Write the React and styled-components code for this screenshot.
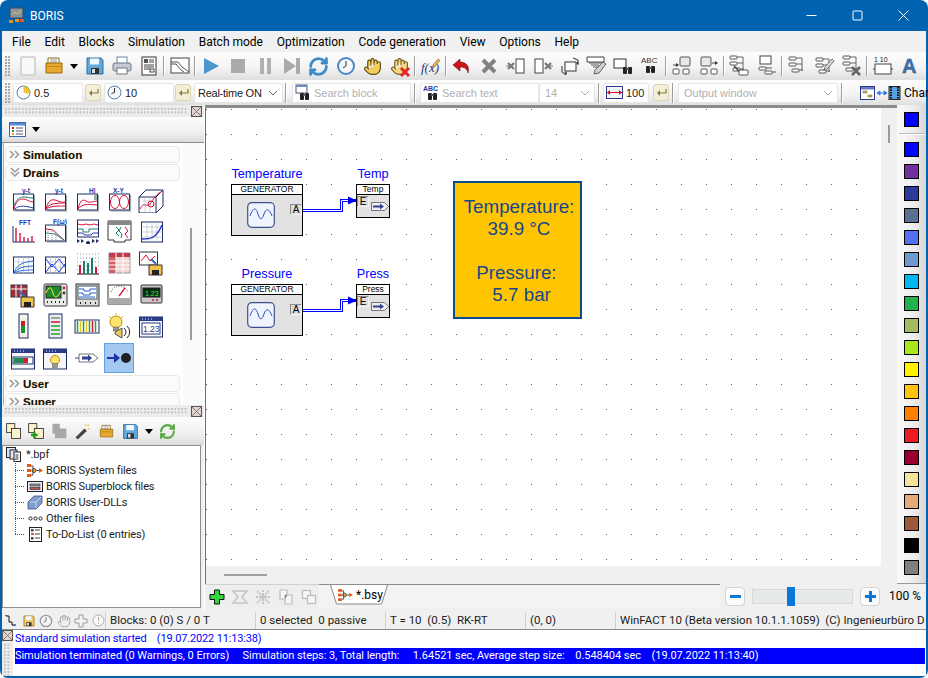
import React from 'react';
import styled, { createGlobalStyle } from 'styled-components';
import { RefreshCw, Hand } from 'lucide-react';

const UI = `Roboto, "Liberation Sans", sans-serif`;
const ARIAL = `"Liberation Sans", Arial, sans-serif`;

const Global = createGlobalStyle`
  html, body { margin: 0; padding: 0; background: #fff; overflow: hidden; }
  #root { width: 928px; height: 678px; }
`;

const Win = styled.div`
  box-sizing: border-box; width: 928px; height: 678px; padding: 0 2px 2px;
  background: #0063b1; border-radius: 8px 8px 8px 8px; overflow: hidden;
  display: flex; flex-direction: column; font: 12px ${UI}; color: #000;
`;
const TitleBar = styled.div`
  height: 31px; flex: none; display: flex; align-items: center; color: #fff; padding-left: 7px; font-size: 12px;
`;
const TitleText = styled.span` margin-left: 6px; flex: 1; `;
const WinBtn = styled.span`
  width: 46px; height: 31px; display: flex; align-items: center; justify-content: center;
`;
const MenuBar = styled.div`
  height: 21px; flex: none; background: #f0f0f0; display: flex; align-items: center; gap: 13.7px; padding-left: 10px;
`;
const Toolbar = styled.div`
  flex: none; height: ${p => p.$h}px; display: flex; align-items: center; padding-left: 3px;
  background: linear-gradient(#fdfdfd, #f4f4f4 55%, #dfdfdf);
`;
const Grip = styled.span`
  flex: none; width: 6px; height: 20px; margin-right: 2px;
  background-image: radial-gradient(circle at 1px 1px, #a9a9a9 .9px, transparent 1px);
  background-size: 3px 3px;
`;
const ToolCell = styled.span`
  flex: none; width: ${p => p.$w || 27}px; height: 26px; display: flex; align-items: center; justify-content: center;
`;
const Sep = styled.span`
  flex: none; width: 1px; height: 20px; background: #9e9e9e; margin: 0 ${p => p.$r ?? 2}px 0 ${p => p.$l ?? 1}px; box-shadow: 1px 0 0 #fff;
`;
const Field = styled.span`
  flex: none; box-sizing: border-box; width: ${p => p.$w}px; height: 20px; margin-left: ${p => p.$ml || 0}px;
  background: #fff; border: 1px solid #e6e6e6; border-radius: 2px; display: flex; align-items: center; padding-left: 2px;
  font: 11px ${ARIAL}; color: ${p => p.$dim ? '#b0b0b0' : '#222'}; white-space: nowrap; overflow: hidden; position: relative;
`;
const FieldText = styled.span` margin-left: ${p => p.$ml ?? 3}px; flex: 1; letter-spacing: ${p => p.$ls || 0}px; `;
const EnterBtn = styled.span`
  flex: none; box-sizing: border-box; width: 16px; height: 17px; margin-left: ${p => p.$ml || 2}px; border: 1px solid #d9d4b4; border-radius: 3px;
  background: #f2eed8; display: flex; align-items: center; justify-content: center;
`;
const CharLabel = styled.span` font: 12px ${UI}; margin-left: 1px; white-space: nowrap; `;
const Main = styled.div` flex: none; height: 507px; display: flex; background: #f0f0f0; `;
const Left = styled.div` flex: none; width: 202px; display: flex; flex-direction: column; background: #f0f0f0; `;
const PanelGrip = styled.div`
  flex: none; height: 12px; display: flex; align-items: center; padding: 0 2px 0 3px; gap: 3px;
  background: #ececec;
`;
const GripDots = styled.span`
  flex: 1; height: 7px;
  background-image: radial-gradient(circle at 1px 1px, #bdbdbd .9px, transparent 1px);
  background-size: 3.4px 3.5px;
`;
const PanelBar = styled.div`
  flex: none; box-sizing: border-box; height: ${p => p.$h}px; display: flex; align-items: center; padding-left: ${p => p.$pl}px;
  background: linear-gradient(#fdfdfd, #ededed 70%, #dadada); border-bottom: ${p => p.$line ? '1px solid #8d8d8d' : 'none'};
`;
const BlockScroll = styled.div`
  flex: none; height: 262px; background: #fff; overflow: hidden; display: flex; border-left: 1px solid #aaa; margin-left: 1px; box-sizing: border-box;
`;
const BlockInner = styled.div` flex: none; width: 178px; padding: 3px 0 0 1px; `;
const Group = styled.div`
  box-sizing: border-box; width: 175px; height: 17px; margin-bottom: 1px; border: 1px solid #e8e8e8; border-radius: 4px; background: #fbfbfb;
  display: flex; align-items: center; gap: 1px; padding-left: 3px;
  font: bold 11.6px ${ARIAL}; color: #111; text-shadow: 0 0 1px #f3c66f;
`;
const IconGrid = styled.div`
  display: grid; grid-template-columns: repeat(5, 32px); grid-auto-rows: 31.6px; padding: 2px 0 1px 2px;
`;
const IconCell = styled.span`
  display: flex; align-items: center; justify-content: center; box-sizing: border-box;
  ${p => p.$on ? 'background:#a3c9f1; border:1px solid #5ea2e6; margin:1px;' : ''}
`;
const ScrollTrack = styled.div` flex: none; width: 20px; padding: 85px 0 0 7px; box-sizing: border-box; background: #fafafa; `;
const ScrollThumbV = styled.div` width: 2px; height: ${p => p.$h}px; background: #9b9b9b; `;
const Tree = styled.div`
  flex: 1; margin: 0 3px 4px 0; background: #fff; border: 1px solid #8f8f8f; font-size: 11px; color: #1c1c1c; letter-spacing: -.15px;
`;
const TreeRoot = styled.div` height: 16px; display: flex; align-items: center; padding-left: 3px; gap: 5px; `;
const TreeKids = styled.div`
  position: relative; margin-left: 12px;
  &::before { content: ''; position: absolute; left: 0; top: -3px; bottom: 8px; border-left: 1px dotted #555; }
`;
const TreeRow = styled.div`
  height: 16px; display: flex; align-items: center; gap: 3px;
  &::before { content: ''; width: 9px; flex: none; border-top: 1px dotted #555; }
`;
const TreeGlyph = styled.span` flex: none; width: 16px; display: flex; justify-content: center; `;
const Right = styled.div` flex: 1; display: flex; flex-direction: column; min-width: 0; border-left: 1px solid #fff; `;
const Upper = styled.div` height: 479px; flex: none; display: flex; `;
const CanvasWrap = styled.div`
  width: 692px; flex: none; display: grid; grid-template-columns: 676px 16px; grid-template-rows: 458px 18px;
  border-top: 3px solid #8c8c8c; background: #f0f0f0;
`;
const Canvas = styled.div`
  position: relative; background-color: #fff; border-left: 1px solid #6e6e6e; overflow: hidden;
  background-image: radial-gradient(circle at .5px .5px, #666 .6px, transparent .9px);
  background-size: 25px 25px; background-position: 0 1px;
`;
const VStrip = styled.div` background: #f0f0f0; padding: 17px 0 0 7px; `;
const HStrip = styled.div` background: #f0f0f0; padding: 8px 0 0 18px; border-left: 1px solid #6e6e6e; `;
const ThumbH = styled.div` width: 43px; height: 2px; background: #a0a0a0; `;
const Corner = styled.div` background: #f0f0f0; `;
const Palette = styled.div`
  flex: 1; display: flex; flex-direction: column; align-items: center; padding-top: 7px; gap: 7px; box-sizing: border-box;
  background: linear-gradient(90deg, #fafafa, #ececec 60%, #d6d6d6); border-bottom: 1px solid #9a9a9a;
`;
const Swatch = styled.span`
  flex: none; box-sizing: border-box; width: 15px; height: 15px; border: 1.4px solid #000; background: ${p => p.$c};
`;
const PaletteSep = styled.span` flex: none; width: 26px; height: 1px; background: #bdbdbd; box-shadow: 0 1px 0 #fff; margin: -1px 0 1px; `;
const TabBar = styled.div` flex: none; height: 28px; display: flex; background: #f0f0f0; `;
const TabTools = styled.div` width: 114px; height: 23px; display: flex; align-items: center; padding-left: 0; background: #eee; border-top: 1px solid #d0d0d0; `;
const TabIcon = styled.span` flex: none; width: 23px; display: flex; justify-content: center; `;
const Hatch = styled.div`
  flex: 1; height: 23px; border-top: 1px solid #8d8d8d; display: flex; padding-left: 11px;
  background: repeating-conic-gradient(#ececec 0 25%, #fafafa 0 50%) 0 0 / 2px 2px;
`;
const Tab = styled.div`
  position: relative; width: 58px; height: 19px; display: flex; align-items: center; gap: 3px; padding-left: 5px; box-sizing: border-box; font-size: 12px;
  & > svg.shape { position: absolute; left: 0; top: 0; z-index: 0; }
  & > * { position: relative; z-index: 1; }
`;
const ZoomZone = styled.div` width: 206px; flex: none; height: 24px; display: flex; align-items: center; padding-left: 5px; box-sizing: border-box; `;
const ZoomBtn = styled.span`
  flex: none; width: 20px; height: 19px; box-sizing: border-box; background: #fbfbfb; border: 1px solid #d4d4d4; border-radius: 4px;
  display: flex; align-items: center; justify-content: center;
`;
const ZoomTrack = styled.div`
  flex: none; width: 101px; height: 15px; margin: 0 7px; box-sizing: border-box; background: #e6e9e9; border: 1px solid #d8d8d8; padding-left: 34px; display: flex; align-items: center;
`;
const ZoomThumb = styled.span` width: 8px; height: 19px; background: #0a78d7; flex: none; `;
const ZoomText = styled.span` margin-left: 9px; font-size: 12px; white-space: nowrap; `;
const Status = styled.div` flex: none; height: 18px; background: #f0f0f0; display: flex; align-items: center; overflow: hidden; border-bottom: 1px solid #8d8d8d; box-sizing: border-box; font-size: 11.5px; `;
const StatusIcons = styled.div` flex: none; width: 103px; display: flex; align-items: center; padding-left: 1px; box-sizing: border-box; `;
const StatusIcon = styled.span` flex: none; width: 17.4px; display: flex; justify-content: center; `;
const StatusCell = styled.div`
  flex: none; box-sizing: border-box; width: ${p => p.$w}px; border-left: 1px solid #cfcfcf; padding-left: 4px; white-space: pre; height: 17px; line-height: 17px; color: #1c1c1c;
`;
const Log = styled.div` flex: none; height: 46px; background: #fff; display: flex; font-size: 11px; `;
const LogGrip = styled.div` flex: none; width: 11px; margin-right: 2px; background: #ececec; display: flex; flex-direction: column; align-items: center; gap: 3px; `;
const LogDots = styled.span`
  flex: 1; width: 7px;
  background-image: radial-gradient(circle at 1px 1px, #bdbdbd .9px, transparent 1px);
  background-size: 3.5px 3.4px;
`;
const LogBody = styled.div` flex: 1; min-width: 0; padding-top: 1px; `;
const LogLine = styled.div`
  height: 16px; line-height: 16px; white-space: pre; margin: ${p => p.$sel ? '1px 1px 0 0' : 0};
  letter-spacing: ${p => p.$sel ? '-.05px' : '-.16px'};
  color: ${p => p.$sel ? '#fff' : '#0000ff'}; background: ${p => p.$sel ? '#0000ff' : 'transparent'};
`;

/* free canvas items */
const NodeLabel = styled.div`
  position: absolute; left: ${p => p.$x}px; top: ${p => p.$y}px; width: ${p => p.$w}px; text-align: center; font: 12.7px/14px ${ARIAL}; color: #0000ff; white-space: nowrap;
`;
const BlockNode = styled.div`
  position: absolute; left: ${p => p.$x}px; top: ${p => p.$y}px; width: ${p => p.$w}px; height: ${p => p.$h}px; box-sizing: border-box;
  border: 1.4px solid #000; background: #e2e2e2; font: 8.5px ${ARIAL}; color: #000;
`;
const BlockHead = styled.div`
  height: 9px; line-height: 9px; background: #fff; border-bottom: 1.2px solid #000; text-align: center; overflow: hidden;
`;
const Port = styled.span`
  position: absolute; left: ${p => p.$x}px; top: ${p => p.$y}px; box-sizing: border-box; width: 12px; height: 11px; line-height: 9px; text-align: center; font-size: 10px;
  background: #dcdcdc; border: 1px solid; border-color: #8a8a8a #f6f6f6 #f6f6f6 #8a8a8a;
`;
const NodeGlyph = styled.span` position: absolute; left: ${p => p.$x}px; top: ${p => p.$y}px; display: flex; `;
const Wires = styled.svg` position: absolute; left: 0; top: 0; `;
const Display = styled.div`
  position: absolute; left: 247px; top: 73px; width: 129px; height: 138px; box-sizing: border-box; border: 2px solid #0b4a8f; background: #ffc600;
  color: #17478f; font: 18.8px/22px ${ARIAL}; text-align: center; padding: 13px 0 0 3px; white-space: pre;
`;

const Ico = ({ s = 22, vb = 22, children }) => <svg width={s} height={s} viewBox={`0 0 ${vb} ${vb}`} style={{ display: 'block' }}>{children}</svg>;

const Bk = ({ x, y, w = 7, h = 3, f = '#fff', c = '#444' }) => <rect x={x} y={y} width={w} height={h} rx=".8" fill={f} stroke={c} strokeWidth=".9" />;
const GX = ({ x, y, s = 4, c = '#777', w = 2.2 }) => <path d={`M${x - s} ${y - s}L${x + s} ${y + s}M${x + s} ${y - s}L${x - s} ${y + s}`} stroke={c} strokeWidth={w} />;
const Bino = ({ x, y }) => <g><rect x={x} y={y} width="4" height="7" rx="1" fill="#222" /><rect x={x + 5} y={y} width="4" height="7" rx="1" fill="#222" /><rect x={x + 3} y={y + 1} width="3" height="2" fill="#555" /></g>;
const Links = ({ x = 2, y = 3 }) => <g><Bk x={x} y={y} /><Bk x={x} y={y + 6} /><Bk x={x + 3} y={y + 12} /><path d={`M${x + 7} ${y + 1}h6M${x + 7} ${y + 7}h6M${x + 10} ${y + 13}h4M${x + 13} ${y + 1}v13`} stroke="#555" fill="none" strokeWidth=".9" /></g>;
const Folder = () => <><path d="M5 3h11v6H5z" fill="#fff" stroke="#8a6a20" /><path d="M7 5h7M7 7h7" stroke="#999" /><path d="M3 8h16v10H3z" fill="#e7aa2f" stroke="#97690f" /><path d="M3.500 11.500h15" stroke="#c1861a" /></>;
const Floppy = ({ f = '#62a8dc', c = '#2f6c9e' }) => <><path d="M3 3h14l2 2v14H3z" fill={f} stroke={c} /><rect x="6" y="3.500" width="9" height="6" fill="#f2f7fb" /><rect x="7" y="13" width="8" height="6" fill="#333" /><rect x="8" y="14" width="3" height="4" fill="#ddd" /></>;
const ClockFace = ({ c = '#4a86c8', w = 2 }) => <><circle cx="11" cy="11" r="8" fill="#f4f8fc" stroke={c} strokeWidth={w} /><path d="M11 6v5l-3 2" stroke="#333" fill="none" strokeWidth="1" /></>;

const T = {
  new: <rect x="5" y="2" width="14" height="18" rx="1" fill="#f8f8f8" stroke="#cacaca" strokeWidth="1.5" />,
  open: <Folder />,
  save: <Floppy />,
  print: <><rect x="6" y="2" width="10" height="7" fill="#fff" stroke="#6f87a3" /><rect x="2" y="8" width="18" height="8" rx="2" fill="#c3cad3" stroke="#6d7580" /><rect x="6" y="13" width="10" height="6" fill="#fff" stroke="#6f7780" /></>,
  doc: <><rect x="4" y="2" width="14" height="18" fill="#fff" stroke="#333" /><rect x="6" y="4" width="4" height="4" fill="#555" /><path d="M11 5h5M11 7h5M6 10h10M6 12h10M6 14h6" stroke="#444" /><rect x="12" y="14" width="4" height="3" fill="#fff" stroke="#444" /></>,
  chart: <><rect x="2" y="3" width="18" height="15" fill="#fff" stroke="#444" /><path d="M2 7h7l4 5 3 2 4 3M2 9h5l5 6 3 2" stroke="#444" fill="none" strokeWidth=".9" /></>,
  play: <path d="M4 3l15 8-15 8z" fill="#4b95cf" />,
  stop: <rect x="4" y="4" width="14" height="14" fill="#aaa" />,
  pause: <path d="M6 3h4v16H6zM13 3h4v16h-4z" fill="#b0b0b0" />,
  step: <path d="M3 3l12 8-12 8zM15 3h4v16h-4z" fill="#aaa" />,
  clock: <ClockFace />,
  fx: <><text x="1" y="17" fontFamily="Liberation Serif" fontStyle="italic" fontSize="13" fill="#2a3a7c">f(x)</text><path d="M13 10l5-6 2 1.500-5 6-3 1z" fill="#e8b25a" stroke="#8a5a20" strokeWidth=".6" /></>,
  undo: <path d="M9 4L2 10l7 6v-4c4 0 7 1 8 6 2-7-2-11-8-11z" fill="#c9141c" stroke="#7b0c10" strokeWidth=".6" />,
  x: <GX x={11} y={11} s={6} c="#828282" w={4} />,
  delL: <><GX x={6} y={11} s={3} /><path d="M1 11h4" stroke="#777" /><rect x="11" y="4" width="8" height="14" fill="#fff" stroke="#444" /></>,
  delR: <><rect x="3" y="4" width="8" height="14" fill="#fff" stroke="#444" /><GX x={16} y={11} s={3} /><path d="M17 11h4" stroke="#777" /></>,
  rot: <><rect x="6" y="7" width="11" height="9" fill="#fff" stroke="#333" /><path d="M3 11v6l4 3M14 3l5 2v5" fill="none" stroke="#333" /><path d="M5 18l3 1.500-.5-3zM17 9l3-.5-1.500-2z" fill="#333" /></>,
  edit: <><path d="M1 2h17v5H1z" fill="#fff" stroke="#444" /><path d="M3 8h12M5 10h8M7 12h6" stroke="#555" /><path d="M9 15l8-8 3 2-7 9-5 1z" fill="#d0d0d0" stroke="#444" strokeWidth=".8" /></>,
  find: <><rect x="1" y="4" width="12" height="9" fill="#fff" stroke="#333" /><Bino x={10} y={12} /></>,
  abc: <><text x="1" y="8" fontSize="8" fontFamily={ARIAL} fill="#333">ABC</text><Bino x={6} y={11} /></>,
  clipL: <><rect x="9" y="2" width="10" height="9" rx="1" fill="#e8e8e8" stroke="#555" /><Bk x={2} y={14} w={6} h={5} /><Bk x={12} y={14} w={6} h={5} /><path d="M2 10h4" stroke="#444" /><path d="M8 10l-3-2v4z" fill="#333" /></>,
  clipR: <><rect x="3" y="2" width="10" height="9" rx="1" fill="#e8e8e8" stroke="#555" /><Bk x={3} y={14} w={6} h={5} /><Bk x={13} y={14} w={6} h={5} /><path d="M14 8h4" stroke="#444" /><path d="M20 8l-3-2v4z" fill="#333" /></>,
  links: <><Links x={1} y={1} /><Bk x={10} y={15} w={9} h={5} /><path d="M5 11l5 5" stroke="#333" strokeWidth="1.200" /></>,
  monitor: <><rect x="4" y="1" width="11" height="8" fill="#fff" stroke="#444" /><Bk x={3} y={12} /><Bk x={9} y={16} /><path d="M10 13h6M16 17h4" stroke="#555" /></>,
  net: <Links x={2} y={2} />,
  netEdit: <><Links x={2} y={3} /><path d="M11 12l7-8 2 2-7 8-3 1z" fill="#ddd" stroke="#444" strokeWidth=".7" /></>,
  netDel: <><Links x={2} y={1} /><GX x={15} y={16} s={4} c="#666" w={2.600} /></>,
  seq: <><text x="2" y="7" fontSize="7" fontFamily={ARIAL} fill="#222">1 10</text><rect x="3" y="9" width="16" height="10" fill="#fff" stroke="#444" /><path d="M1 14h2M19 14h2" stroke="#444" /></>,
  font: <text x="3" y="18" fontFamily={ARIAL} fontWeight="bold" fontSize="20" fill="#4172ae" stroke="#24507f" strokeWidth=".4">A</text>,
};
const Lucide = {
  refresh: <RefreshCw size={21} color="#3a8ccb" strokeWidth={3.2} />,
  hand: <Hand size={19} color="#5a4a10" fill="#f3cc60" strokeWidth={1.4} />,
  handx: <span style={{ position: 'relative', display: 'flex' }}><Hand size={19} color="#7a5a20" fill="#f6d67e" strokeWidth={1.4} /><svg width="12" height="12" viewBox="0 0 12 12" style={{ position: 'absolute', right: -2, bottom: -2 }}><GX x={6} y={6} s={4} c="#e0252b" w={3} /></svg></span>,
};
const Drop = () => <svg width="8" height="5" viewBox="0 0 8 5" style={{ display: 'block' }}><path d="M0 0h8L4 5z" fill="#000" /></svg>;

const bar1 = ['new', 'open', 'drop', 'save', 'print', 'doc', '|', 'chart', '|', 'play', 'stop', 'pause', 'step', 'refresh', 'clock', 'hand', 'handx', '|', 'fx', '|', 'undo', 'x', 'delL', 'delR', 'rot', 'edit', 'find', 'abc', '|', 'clipL', 'clipR', '|', 'links', 'monitor', '|', 'net', 'netEdit', 'netDel', '|', 'seq', 'font'];

const Cross = () => <svg width="11" height="11" viewBox="0 0 11 11"><rect x=".5" y=".5" width="10" height="10" fill="#d8d8d8" stroke="#555" /><path d="M1 1l9 9M10 1l-9 9" stroke="#a86a5a" strokeWidth="1" /></svg>;
const Chev = ({ c = '#666', x }) => <svg width="10" height="6" viewBox="0 0 10 6" style={{ position: x ? 'absolute' : 'static', right: x }}><path d="M1 1l4 4 4-4" fill="none" stroke={c} /></svg>;
const EnterArrow = ({ c = '#8a7a35' }) => <svg width="11" height="9" viewBox="0 0 11 9"><path d="M10 1v4H2" fill="none" stroke={c} strokeWidth="1.200" /><path d="M4 2L1 5l3 3z" fill={c} /></svg>;
const Binoc = ({ abc }) => <svg width="18" height="18" viewBox="0 0 18 18" style={{ flex: 'none' }}>
  {abc ? <text x="0" y="7" fontSize="7" fontWeight="bold" fontFamily={ARIAL} fill="#2040a0">ABC</text> : <><rect x="1" y="1" width="11" height="8" fill="#fff" stroke="#557" /><rect x="1" y="1" width="11" height="2" fill="#6a8fc0" /></>}
  <Bino x={5} y={9} />
</svg>;

const Fr = ({ children, sh = true }) => <>{sh && <path d="M5 23.800h19.500V8" fill="none" stroke="#9aa" strokeWidth="1.200" />}<rect x="3.500" y="7" width="20" height="16" fill="#fff" stroke="#1d2b66" />{children}</>;
const R = '#d6123c', G = '#1a7f6e', N = '#2436a8';
const Grid = () => <path d="M3.500 12h20M3.500 17h20M8.500 7v16M13.500 7v16M18.500 7v16" stroke="#b8c0c8" strokeWidth=".7" />;
const TT = ({ x, y, t, f = N, s = 6.500 }) => <text x={x} y={y} fontSize={s} fontFamily={ARIAL} fontWeight="bold" fill={f}>{t}</text>;
const Lamp = ({ cx = 11, cy = 11, r = 6 }) => <><circle cx={cx} cy={cy} r={r} fill="#ffe36a" stroke="#b98a10" /><rect x={cx - 2.500} y={cy + r - 1} width="5" height="4" fill="#999" stroke="#555" strokeWidth=".5" /></>;
const WinFrame = ({ y = 7, h = 16, children }) => <><rect x="1.500" y={y} width="23" height={h} fill="#f4f6fa" stroke="#1d2b66" /><rect x="1.500" y={y} width="23" height="4" fill="#2a3a86" /><path d={`M4 ${y + 2}h1M7 ${y + 2}h1M10 ${y + 2}h1M13 ${y + 2}h1`} stroke="#fff" />{children}</>;

const B = [
  <Fr><TT x={12} y={6} t="y-t" /><path d="M4 22c2-8 5-10 9-10s6 3 10 3" fill="none" stroke={R} /><path d="M4 18c4-8 7-8 10-8s5 1 9 1" fill="none" stroke={G} /><path d="M5 22c3-3 8-4 18-1" fill="none" stroke={N} /></Fr>,
  <Fr><TT x={13} y={6} t="y-t" /><path d="M4 22c2-8 5-10 9-9s6 3 10 2" fill="none" stroke={R} /><path d="M4 22c3-5 8-6 19-6M4 22c5-3 10-3 19-3" fill="none" stroke={R} /></Fr>,
  <Fr><TT x={15} y={6} t="H|" /><rect x="20" y="7" width="3" height="6" fill="#9aa" /><path d="M4 22c2-9 5-10 8-8 3 2 4 1 11 0M4 22c4-5 9-5 19-4" fill="none" stroke={R} /></Fr>,
  <Fr><TT x={7} y={6} t="X-Y" /><ellipse cx="9" cy="15" rx="4.500" ry="6.500" fill="none" stroke={R} /><ellipse cx="18" cy="15" rx="4.500" ry="6.500" fill="none" stroke={R} /></Fr>,
  <><path d="M1 10l7-7h17v16l-7 7H1zM1 10h17v16M18 10l7-7" fill="#fff" stroke="#1d2b66" /><path d="M2 22c4-8 6-2 9-4s5-10 12-13" fill="none" stroke={R} /><path d="M4 14h13M4 18h13M7 10v15M12 10v15" stroke="#aab" strokeWidth=".5" /><circle cx="13" cy="17" r="3" fill="none" stroke={R} /></>,
  <><TT x={9} y={7} t="FFT" /><path d="M3 8v16h22" fill="none" stroke="#1d2b66" /><path d="M6 24v-14M10 24v-9M14 24v-5M18 24v-4M22 24v-6" stroke={R} strokeWidth="1.400" /></>,
  <Fr><TT x={11} y={6} t="F(ω)" /><path d="M4 11l7 1 11 10" fill="none" stroke={R} /><path d="M4 15l9 1 9 6" fill="none" stroke={G} /><path d="M6 13v9M10 13v9M14 15v7" stroke="#889" strokeDasharray="1 1" /></Fr>,
  <><rect x="3.500" y="2" width="21" height="17" fill="#fff" stroke="#1d2b66" /><path d="M4 6l4 1 4-1 4 1 4-1 4 1" fill="none" stroke={R} /><path d="M4 11h5v3h6v-3h9" fill="none" stroke={G} /><path d="M4 15h4l3 2h6l2-2h5" fill="none" stroke={N} /><path d="M3 21v4l3-2zM7 21v4l3-2zM14 23a2 2 0 1 0 .1 0M22 21v4l3-2zM18 21v4l3-2z" fill="#1d2b66" /></>,
  <><path d="M2 3h23v19h-6v2H8v-2H2z" fill="#fff" stroke="#333" /><rect x="2" y="3" width="23" height="4" fill="#888" /><path d="M10 9l3 3-3 3 3 3M15 9l-2 4 3 3-1 4" fill="none" stroke={G} /><path d="M19 9l3 4-3 3 3 4" fill="none" stroke={R} /></>,
  <><rect x="3.500" y="4" width="21" height="20" fill="#fff" stroke="#1d2b66" /><path d="M3.500 9h21M3.500 14h21M3.500 19h21M9 4v20M14 4v20M19 4v20" stroke="#b8c0c8" strokeWidth=".7" /><path d="M4 21c8 0 14 0 20-14" fill="none" stroke="#1b2fd0" strokeWidth="1.400" /></>,
  <Fr sh={false}><Grid /><path d="M4 23c2-6 6-11 19-12M4 23c3-4 8-7 19-7M4 23c4-2 8-3 19-3" fill="none" stroke="#2a72e0" /></Fr>,
  <Fr sh={false}><Grid /><path d="M4 22l6-8 7 8 6-8M4 9l6 8 7-8 6 8" fill="none" stroke="#2040d8" /></Fr>,
  <><path d="M3 4h22M3 8h22M3 12h22M3 16h22M3 20h22" stroke="#778" strokeDasharray="1 2" strokeWidth=".8" /><path d="M3 24h22" stroke="#111" /><path d="M6 24v-9" stroke={R} strokeWidth="2" /><path d="M10 24v-13" stroke={G} strokeWidth="2" /><path d="M14 24v-11" stroke={G} strokeWidth="2" /><path d="M18 24v-16" stroke={G} strokeWidth="2" /><path d="M22 24v-7" stroke={R} strokeWidth="2" /></>,
  <><rect x="3" y="3" width="21" height="20" fill="#f2d4d0" stroke="#999" /><rect x="3" y="3" width="21" height="4" fill="#c43a4a" /><path d="M3 7h7v16H3z" fill="#d0606a" /><path d="M3 11h21M3 15h21M3 19h21M10 3v20M17 3v20" stroke="#fff" /></>,
  <><rect x="1.500" y="2" width="18" height="13" fill="#fff" stroke="#334" /><path d="M3 11l5-6 4 6 5-5" fill="none" stroke={R} /><path d="M13 9l5 5" stroke="#2a6cc8" strokeWidth="2" /><path d="M11 15h13v10H11z" fill="#f2c14a" stroke="#333" /><rect x="14" y="20" width="7" height="5" fill="#222" /></>,
  <><rect x="1" y="3" width="16" height="12" fill="#a03040" stroke="#334" /><path d="M1 7h16M6 3v12M11 3v12" stroke="#fff" /><path d="M9 9l6 6" stroke="#2a6cc8" strokeWidth="2" /><path d="M11 15h13v10H11z" fill="#f2c14a" stroke="#333" /><rect x="14" y="20" width="7" height="5" fill="#222" /></>,
  <><rect x="2" y="2" width="23" height="22" rx="1.500" fill="#e9e9e9" stroke="#333" /><rect x="4" y="4" width="15" height="12" fill="#1d8a2b" stroke="#222" /><path d="M4 11c3-7 5-7 7 0s5 4 8-2" fill="none" stroke="#ffe94a" /><circle cx="22" cy="6" r="1.400" fill={R} /><circle cx="22" cy="11" r="1.400" fill="#333" /><path d="M5 20h1M9 20h1M13 20h1M17 20h1M21 20h1" stroke="#222" strokeWidth="2" /></>,
  <><rect x="2" y="2" width="23" height="22" fill="#dcdcdc" stroke="#333" /><rect x="4" y="4" width="19" height="13" fill="#fff" stroke="#356" /><path d="M5 7h5v2h6V7h6M5 11h4v2h7v-2h6M5 15h16" stroke="#2a5cc8" fill="none" /><path d="M6 21h1M11 21h1M16 21h1M21 21h1" stroke="#222" strokeWidth="2" /></>,
  <><rect x="2" y="3" width="23" height="19" fill="#fff" stroke="#333" /><rect x="2" y="16" width="23" height="6" fill="#aaa" /><path d="M5 10a9 9 0 0 1 17 0" fill="none" stroke="#333" strokeDasharray="1 1.500" /><path d="M13 14l6-8" stroke={R} strokeWidth="1.300" /></>,
  <><rect x="3" y="3" width="21" height="18" rx="1" fill="#c8c8c8" stroke="#333" /><rect x="5" y="6" width="17" height="9" fill="#062c14" stroke="#222" /><text x="7" y="13.500" fontSize="7" fontFamily={ARIAL} fill="#38e84a">1.23</text><path d="M14 18h2M18 18h2" stroke={R} strokeWidth="1.600" /></>,
  <><rect x="9" y="1" width="9" height="24" fill="#f8f4e8" stroke="#1d2b66" /><rect x="11" y="5" width="4" height="8" fill="#eee" /><rect x="11" y="8" width="4" height="5" fill="#c02030" /><rect x="11" y="13" width="4" height="7" fill="#1a8f3c" /></>,
  <><rect x="7" y="1" width="13" height="24" fill="#e8eef0" stroke="#1d2b66" /><path d="M9 5h9" stroke="#888" strokeWidth="1.500" /><path d="M9 9h9" stroke={R} strokeWidth="1.500" /><path d="M9 13h9M9 17h9M9 21h9" stroke="#2aa32a" strokeWidth="1.500" /></>,
  <><rect x="1" y="7" width="24" height="13" fill="#fff" stroke="#1d2b66" /><path d="M3.500 8v11M9.500 8v11M15.500 8v11M21.500 8v11" stroke="#2aa32a" strokeWidth="1.500" /><path d="M6.500 8v11M12.500 8v11" stroke="#e8c820" strokeWidth="1.500" /><path d="M18.500 8v11" stroke={R} strokeWidth="1.500" /></>,
  <><Lamp cx={10} cy={9} r={6} /><path d="M9 19l7-4v10l-7-4z" fill="#e8c860" stroke="#554" /><path d="M18 15a5 5 0 0 1 0 8M21 13a8 8 0 0 1 0 12" fill="none" stroke="#222" /><path d="M3 3l2 2M10 0v2M17 3l-2 2" stroke="#e8a820" /></>,
  <WinFrame y={4} h={20}><rect x="4" y="10" width="18" height="11" fill="#fff" stroke="#2a3a86" /><text x="5" y="19" fontSize="8.500" fontFamily={ARIAL} fill="#2a3a86">1.23</text></WinFrame>,
  <WinFrame y={4} h={20}><rect x="3" y="12" width="20" height="7" fill="#fff" stroke="#1d2b66" /><rect x="4" y="13" width="10" height="5" fill="#1e8a50" /><rect x="14" y="13" width="4" height="5" fill="#d02030" /></WinFrame>,
  <WinFrame y={4} h={20}><Lamp cx={13} cy={15} r={4.500} /></WinFrame>,
  <><path d="M1 13h4" stroke="#3a4a90" /><path d="M5 9h14l5 4-5 4H5z" fill="#fff" stroke="#334" strokeWidth=".7" /><path d="M8 11.500h6V9.500l4 3.500-4 3.500v-2H8z" fill="#33408f" /></>,
  <><path d="M1 13h8" stroke="#2430a8" strokeWidth="2" /><path d="M8 8l6 5-6 5z" fill="#2430a8" /><circle cx="20" cy="13" r="5" fill="#222" /></>,
];

const colors = ['#0000ff', '#7030a0', '#2e3a9a', '#5a7090', '#5470f0', '#7099d0', '#00b8f0', '#22b14c', '#a2bc62', '#a8e61d', '#fff200', '#ffc20e', '#ff7f00', '#ed1c24', '#990030', '#f5e49c', '#e5aa7a', '#9c5a3c', '#000000', '#7f7f7f'];

const Generator = ({ x, y }) => (
  <BlockNode $x={x} $y={y} $w={72} $h={52}>
    <BlockHead>GENERATOR</BlockHead>
    <NodeGlyph $x={15} $y={17}>
      <svg width="28" height="26" viewBox="0 0 28 26"><rect x=".7" y=".7" width="26.600" height="24.600" rx="4" fill="#f0f4fc" stroke="#3d4f8f" strokeWidth="1.200" /><path d="M3 14c3-9 6-9 8-2s4 6 6 0 5-6 8 2" fill="none" stroke="#2a50c0" /></svg>
    </NodeGlyph>
    <Port $x={58} $y={19}>A</Port>
  </BlockNode>
);
const OutBlock = ({ x, y, t }) => (
  <BlockNode $x={x} $y={y} $w={34} $h={34}>
    <BlockHead>{t}</BlockHead>
    <Port $x={0} $y={11}>E</Port>
    <NodeGlyph $x={14} $y={17}>
      <svg width="18" height="10" viewBox="0 0 18 10"><path d="M.5.500h13l4 4-4 4H.5z" fill="#eee" stroke="#445" strokeWidth=".7" /><path d="M2 3.500h7V1.500l4 3-4 3v-2H2z" fill="#33408f" /></svg>
    </NodeGlyph>
  </BlockNode>
);

export default function App() {
  return (
    <Win>
      <Global />
      <TitleBar>
        <svg width="15" height="18" viewBox="0 0 15 18"><rect x="1" y="1" width="13" height="10" fill="#8696a8" stroke="#3a4656" /><path d="M3 8l3-3 2 2 4-3" stroke="#e8c820" fill="none" /><rect x="0" y="13" width="4" height="3" fill="#e89020" /><rect x="6" y="12" width="4" height="3" fill="#e89020" /><rect x="11" y="12" width="4" height="3" fill="#d86020" /></svg>
        <TitleText>BORIS</TitleText>
        <WinBtn><svg width="11" height="11" viewBox="0 0 11 11"><path d="M.5 5.500h10" stroke="#fff" /></svg></WinBtn>
        <WinBtn><svg width="11" height="11" viewBox="0 0 11 11"><rect x="1" y="1" width="9" height="9" rx="1" fill="none" stroke="#fff" /></svg></WinBtn>
        <WinBtn><svg width="11" height="11" viewBox="0 0 11 11"><path d="M.5.500l10 10M10.500.500l-10 10" stroke="#fff" /></svg></WinBtn>
      </TitleBar>
      <MenuBar>
        {['File', 'Edit', 'Blocks', 'Simulation', 'Batch mode', 'Optimization', 'Code generation', 'View', 'Options', 'Help'].map(m => <span key={m}>{m}</span>)}
      </MenuBar>
      <Toolbar $h={28}>
        <Grip />
        {bar1.map((k, i) => k === '|' ? <Sep key={i} /> : k === 'drop'
          ? <ToolCell key={i} $w={14}><Drop /></ToolCell>
          : <ToolCell key={i}>{Lucide[k] || <Ico>{T[k]}</Ico>}</ToolCell>)}
      </Toolbar>
      <Toolbar $h={25}>
        <Grip />
        <Field $w={70}>
          <svg width="15" height="15" viewBox="0 0 15 15"><circle cx="7.500" cy="7.500" r="6.500" fill="#fff" stroke="#5a7a9a" /><path d="M7.500 7.500V1a6.500 6.500 0 0 1 6 8z" fill="#f2c230" /></svg>
          <FieldText>0.5</FieldText>
        </Field>
        <EnterBtn><EnterArrow /></EnterBtn>
        <Field $w={70} $ml={3}>
          <svg width="15" height="15" viewBox="0 0 15 15"><circle cx="7.500" cy="7.500" r="6.500" fill="#f4f8fc" stroke="#5a7a9a" /><path d="M7.500 3v4.500l-3 1" stroke="#333" fill="none" /></svg>
          <FieldText>10</FieldText>
        </Field>
        <EnterBtn $ml={1}><EnterArrow /></EnterBtn>
        <Field $w={89} $ml={3}><FieldText $ml={1} $ls={-.25}>Real-time ON</FieldText><Chev x={4} /></Field>
        <Sep $l={2} $r={6} />
        <Field $w={119} $dim><Binoc /><FieldText $ml={1}>Search block</FieldText></Field>
        <Sep $l={3} $r={5} />
        <Field $w={119} $dim><Binoc abc /><FieldText $ml={1}>Search text</FieldText></Field>
        <Field $w={56} $dim><FieldText>14</FieldText><Chev c="#aaa" x={4} /></Field>
        <Sep $l={3} $r={4} />
        <Field $w={46}>
          <svg width="17" height="13" viewBox="0 0 17 13" style={{ flex: 'none' }}><rect x=".5" y=".5" width="16" height="12" fill="#f4f4f4" stroke="#2a3a86" /><path d="M1 6.500h15" stroke="#d01020" /><path d="M1 6.500l3-2.500v5zM16 6.500l-3-2.500v5z" fill="#d01020" /></svg>
          <FieldText>100</FieldText>
        </Field>
        <EnterBtn $ml={4}><EnterArrow /></EnterBtn>
        <Sep $l={3} $r={5} />
        <Field $w={160} $dim><FieldText>Output window</FieldText><Chev c="#aaa" x={4} /></Field>
        <Sep $l={3} $r={18} />
        <svg width="43" height="14" viewBox="0 0 43 14" style={{ flex: 'none' }}><rect x=".5" y=".5" width="14" height="13" fill="#fff" stroke="#2a3a86" /><rect x="1" y="1" width="13" height="2.500" fill="#6a7ac0" /><rect x="3" y="5" width="4" height="2" fill="#c9b04a" stroke="#555" strokeWidth=".4" /><rect x="8" y="9" width="4" height="2" fill="#c9b04a" stroke="#555" strokeWidth=".4" /><path d="M17 7h10M17 7l3-2v4zM27 7l-3-2v4z" stroke="#3a7ae0" fill="#3a7ae0" /><rect x="29" y=".5" width="11" height="13" fill="#57a0e0" stroke="#222" /><path d="M31 1v12M38 1v12" stroke="#111" strokeWidth="2" strokeDasharray="1.500 1" /></svg>
        <CharLabel>Char</CharLabel>
      </Toolbar>
      <Main>
        <Left>
          <PanelGrip><GripDots /><Cross /></PanelGrip>
          <PanelBar $h={26} $pl={7} $line>
            <svg width="17" height="15" viewBox="0 0 17 15"><rect x=".5" y=".5" width="16" height="14" fill="#fff" stroke="#3a6ab0" /><rect x="1" y="1" width="15" height="2.500" fill="#5a8ad0" /><path d="M3 6h2" stroke="#d02020" strokeWidth="2" /><path d="M3 9h2" stroke="#20a040" strokeWidth="2" /><path d="M3 12h2" stroke="#e0a020" strokeWidth="2" /><path d="M7 6h7M7 9h7M7 12h7" stroke="#557" /></svg>
            <ToolCell $w={20}><Drop /></ToolCell>
          </PanelBar>
          <BlockScroll>
            <BlockInner>
              <Group><svg width="13" height="9" viewBox="0 0 13 9"><path d="M1 1l3.500 3.500L1 8M6 1l3.500 3.500L6 8" fill="none" stroke="#9a9a9a" strokeWidth="1.500" /></svg>Simulation</Group>
              <Group><svg width="13" height="11" viewBox="0 0 13 11"><path d="M2 1l4 4 4-4M2 5l4 4 4-4" fill="none" stroke="#9a9a9a" strokeWidth="1.500" /></svg>Drains</Group>
              <IconGrid>
                {B.map((g, i) => <IconCell key={i} $on={i === B.length - 1}><Ico s={26} vb={26}>{g}</Ico></IconCell>)}
              </IconGrid>
              <Group><svg width="13" height="9" viewBox="0 0 13 9"><path d="M1 1l3.500 3.500L1 8M6 1l3.500 3.500L6 8" fill="none" stroke="#9a9a9a" strokeWidth="1.500" /></svg>User</Group>
              <Group><svg width="13" height="9" viewBox="0 0 13 9"><path d="M1 1l3.500 3.500L1 8M6 1l3.500 3.500L6 8" fill="none" stroke="#9a9a9a" strokeWidth="1.500" /></svg>Super</Group>
            </BlockInner>
            <ScrollTrack><ScrollThumbV $h={112} /></ScrollTrack>
          </BlockScroll>
          <PanelGrip><GripDots /><Cross /></PanelGrip>
          <PanelBar $h={28} $pl={1}>
            <ToolCell $w={22}><Ico s={18}><rect x="2" y="2" width="10" height="11" fill="#fdf3cc" stroke="#222" /><rect x="8" y="8" width="11" height="12" fill="#fdf3cc" stroke="#222" /></Ico></ToolCell>
            <ToolCell $w={22}><Ico s={18}><rect x="2" y="2" width="10" height="11" fill="#fdf3cc" stroke="#222" /><rect x="9" y="8" width="11" height="12" fill="#fdf3cc" stroke="#222" /><path d="M5 16h8M9 12v8" stroke="#1ea01e" strokeWidth="3" /></Ico></ToolCell>
            <ToolCell $w={23}><Ico s={18}><path d="M3 2h9v6h8v12H6V14H3z" fill="#a8a8a8" /></Ico></ToolCell>
            <ToolCell $w={24}><Ico s={18}><path d="M3 19L14 8l3 3L6 21z" fill="#444" /><path d="M15 3l1 2M19 3l-1 2M20 8h-2" stroke="#e8c020" strokeWidth="1.500" /></Ico></ToolCell>
            <ToolCell $w={24}><Ico s={17}><Folder /></Ico></ToolCell>
            <ToolCell $w={24}><Ico s={19}><Floppy /></Ico></ToolCell>
            <ToolCell $w={14}><Drop /></ToolCell>
            <ToolCell $w={22}><RefreshCw size={17} color="#5aa848" strokeWidth={3} /></ToolCell>
          </PanelBar>
          <Tree>
            <TreeRoot>
              <svg width="15" height="15" viewBox="0 0 15 15"><rect x=".5" y=".5" width="9" height="10" fill="#dfe7f4" stroke="#222" /><rect x="4" y="3" width="7" height="9" fill="#dfe7f4" stroke="#222" /><rect x="8" y="5" width="6.500" height="9.500" fill="#fff" stroke="#222" /><path d="M9.500 8h3M9.500 10h3M9.500 12h3" stroke="#333" /></svg>
              <span>*.bpf</span>
            </TreeRoot>
            <TreeKids>
              <TreeRow><TreeGlyph><svg width="16" height="13" viewBox="0 0 16 13"><rect x="0" y="0" width="4" height="3" fill="#e05a20" /><rect x="0" y="5" width="4" height="3" fill="#e05a20" /><rect x="0" y="10" width="4" height="3" fill="#e05a20" /><circle cx="7" cy="6.500" r="2" fill="#f0b030" stroke="#555" /><path d="M4 2h2v9H4M9 6.500h3" stroke="#445" fill="none" /><path d="M12 4l4 2.500-4 2.500z" fill="#e05a20" /></svg></TreeGlyph>BORIS System files</TreeRow>
              <TreeRow><TreeGlyph><svg width="16" height="11" viewBox="0 0 16 11"><rect x=".5" y=".5" width="15" height="10" fill="#eef" stroke="#222" /><rect x="3" y="3" width="10" height="2" fill="#999" stroke="#222" strokeWidth=".6" /><rect x="3" y="6.500" width="10" height="2" fill="#d05050" stroke="#222" strokeWidth=".6" /></svg></TreeGlyph>BORIS Superblock files</TreeRow>
              <TreeRow><TreeGlyph><svg width="16" height="15" viewBox="0 0 16 15"><path d="M1 7l6-6h8v7l-6 6H1z" fill="#7f9bd0" stroke="#3a4f80" strokeWidth=".8" /><path d="M3 7h6l5-5M9 7v6" stroke="#dfe7f8" fill="none" strokeWidth=".8" /></svg></TreeGlyph>BORIS User-DLLs</TreeRow>
              <TreeRow><TreeGlyph><svg width="15" height="5" viewBox="0 0 15 5"><circle cx="2.500" cy="2.500" r="1.600" fill="#fff" stroke="#222" /><circle cx="7.500" cy="2.500" r="1.600" fill="#fff" stroke="#222" /><circle cx="12.500" cy="2.500" r="1.600" fill="#fff" stroke="#222" /></svg></TreeGlyph>Other files</TreeRow>
              <TreeRow><TreeGlyph><svg width="13" height="15" viewBox="0 0 13 15"><rect x=".5" y=".5" width="12" height="14" fill="#fff" stroke="#222" /><rect x="2" y="2" width="2.500" height="2.500" fill="#444" /><rect x="2" y="10" width="2.500" height="2.500" fill="#444" /><path d="M6 3h5M6 7h5M6 11h5" stroke="#444" /><path d="M2 7h3" stroke="#d02020" strokeWidth="1.300" /></svg></TreeGlyph>To-Do-List (0 entries)</TreeRow>
            </TreeKids>
          </Tree>
        </Left>
        <Right>
          <Upper>
            <CanvasWrap>
              <Canvas>
                <Wires width="400" height="260">
                  <g fill="none">
                    <path d="M97 102.500h38.500V92.500h15M97 202.500h38.500V192.500h15" stroke="#0000ff" strokeWidth="3" />
                    <path d="M97 102.500h38.500V92.500h7M97 202.500h38.500V192.500h7" stroke="#fff" strokeWidth="1" />
                  </g>
                  <path d="M142 88.500l9 4-9 4zM142 188.500l9 4-9 4z" fill="#0000ff" />
                </Wires>
                <NodeLabel $x={25} $y={59} $w={72}>Temperature</NodeLabel>
                <Generator x={25} y={76} />
                <NodeLabel $x={150} $y={59} $w={34}>Temp</NodeLabel>
                <OutBlock x={150} y={76} t="Temp" />
                <NodeLabel $x={25} $y={159} $w={72}>Pressure</NodeLabel>
                <Generator x={25} y={176} />
                <NodeLabel $x={150} $y={159} $w={34}>Press</NodeLabel>
                <OutBlock x={150} y={176} t="Press" />
                <Display>{'Temperature:\n39.9 °C\n\nPressure: \n 5.7 bar'}</Display>
              </Canvas>
              <VStrip><ScrollThumbV $h={18} /></VStrip>
              <HStrip><ThumbH /></HStrip>
              <Corner />
            </CanvasWrap>
            <Palette>
              <Swatch $c="#0000ff" />
              <PaletteSep />
              {colors.map(c => <Swatch key={c} $c={c} />)}
            </Palette>
          </Upper>
          <TabBar>
            <TabTools>
              <TabIcon><svg width="16" height="16" viewBox="0 0 16 16"><path d="M5.500 1h5v4.500H15v5h-4.500V15h-5v-4.500H1v-5h4.500z" fill="#2fd63c" stroke="#111" /></svg></TabIcon>
              <TabIcon><svg width="16" height="14" viewBox="0 0 16 14"><path d="M1 1h14l-5 6 5 6H1l5-6z" fill="none" stroke="#c4c4c4" strokeWidth="1.500" /></svg></TabIcon>
              <TabIcon><svg width="16" height="16" viewBox="0 0 16 16"><path d="M2 2l12 12M14 2L2 14M8 1v14M1 8h14" stroke="#c4c4c4" strokeWidth="2" strokeDasharray="2 1" /></svg></TabIcon>
              <TabIcon><svg width="16" height="16" viewBox="0 0 16 16"><path d="M2 1h7v5h5v9H7v-5H2z" fill="#f6f6f6" stroke="#bcbcbc" strokeWidth="1.200" /><path d="M9 6H7v4" stroke="#bcbcbc" /></svg></TabIcon>
              <TabIcon><svg width="16" height="16" viewBox="0 0 16 16"><rect x="1.500" y="1.500" width="8" height="8" fill="#f6f6f6" stroke="#bcbcbc" strokeWidth="1.200" /><rect x="6.500" y="6.500" width="8" height="8" fill="#f6f6f6" stroke="#bcbcbc" strokeWidth="1.200" /></svg></TabIcon>
            </TabTools>
            <Hatch>
              <Tab>
                <svg className="shape" width="58" height="20" viewBox="0 0 58 20"><path d="M.5 0l6 19h45l6-19" fill="#fff" stroke="#888" /></svg>
                <svg width="15" height="12" viewBox="0 0 16 13" style={{ marginLeft: 3 }}><rect x="0" y="0" width="4" height="3" fill="#e05a20" /><rect x="0" y="5" width="4" height="3" fill="#e05a20" /><rect x="0" y="10" width="4" height="3" fill="#e05a20" /><circle cx="7" cy="6.500" r="2" fill="#f0b030" stroke="#555" /><path d="M4 2h2v9H4M9 6.500h3" stroke="#445" fill="none" /><path d="M12 4l4 2.500-4 2.500z" fill="#e05a20" /></svg>
                <span>*.bsy</span>
              </Tab>
            </Hatch>
            <ZoomZone>
              <ZoomBtn><svg width="11" height="3" viewBox="0 0 11 3"><path d="M0 0h11v3H0z" fill="#0a78d7" /></svg></ZoomBtn>
              <ZoomTrack><ZoomThumb /></ZoomTrack>
              <ZoomBtn><svg width="11" height="11" viewBox="0 0 11 11"><path d="M4 0h3v4h4v3H7v4H4V7H0V4h4z" fill="#0a78d7" /></svg></ZoomBtn>
              <ZoomText>100 %</ZoomText>
            </ZoomZone>
          </TabBar>
        </Right>
      </Main>
      <Status>
        <StatusIcons>
          <StatusIcon><svg width="13" height="13" viewBox="0 0 13 13"><path d="M1 2h3v6h3v3h4M1 2V1" fill="none" stroke="#111" /><path d="M8 11h2v1H8z" fill="#2060d0" /></svg></StatusIcon>
          <StatusIcon><svg width="14" height="14" viewBox="0 0 22 22"><Floppy f="#f0c860" c="#8a5a10" /></svg></StatusIcon>
          <StatusIcon><svg width="14" height="14" viewBox="0 0 22 22"><circle cx="11" cy="11" r="9" fill="#f4f4f4" stroke="#999" strokeWidth="2" /><path d="M11 5v6l-4 2" stroke="#777" fill="none" strokeWidth="1.500" /></svg></StatusIcon>
          <StatusIcon><Hand size={14} color="#999" strokeWidth={1.4} /></StatusIcon>
          <StatusIcon><svg width="14" height="14" viewBox="0 0 14 14"><path d="M5 1h4v4h4v4H9v4H5V9H1V5h4z" fill="#f4f4f4" stroke="#999" /></svg></StatusIcon>
          <StatusIcon><svg width="13" height="13" viewBox="0 0 13 13"><circle cx="6.500" cy="6.500" r="5.500" fill="#f8f8f8" stroke="#aaa" /><path d="M6.500 3v4M6.500 8.500v1.500" stroke="#aaa" /></svg></StatusIcon>
        </StatusIcons>
        <StatusCell $w={150}>Blocks: 0 (0) S / 0 T</StatusCell>
        <StatusCell $w={130}>0 selected  0 passive</StatusCell>
        <StatusCell $w={140}>T = 10  (0.5)  RK-RT</StatusCell>
        <StatusCell $w={90}>(0, 0)</StatusCell>
        <StatusCell $w={320}>WinFACT 10 (Beta version 10.1.1.1059)  (C) Ingenieurbüro D</StatusCell>
      </Status>
      <Log>
        <LogGrip><Cross /><LogDots /></LogGrip>
        <LogBody>
          <LogLine>Standard simulation started    (19.07.2022 11:13:38)</LogLine>
          <LogLine $sel>Simulation terminated (0 Warnings, 0 Errors)     Simulation steps: 3, Total length:     1.64521 sec, Average step size:    0.548404 sec    (19.07.2022 11:13:40)</LogLine>
        </LogBody>
      </Log>
    </Win>
  );
}
